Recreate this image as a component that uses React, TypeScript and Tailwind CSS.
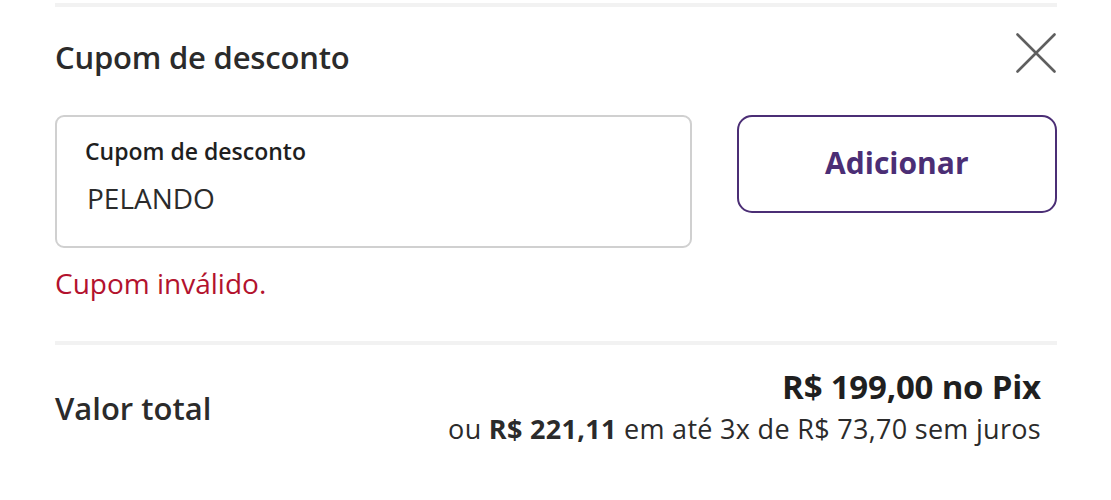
import React from "react";

const font = { fontFamily: '"Open Sans", "Noto Sans", sans-serif' };

function CloseIcon() {
  return (
    <svg width="40" height="40" viewBox="0 0 40 40" fill="none" aria-hidden="true">
      <path d="M1.5 1.5 L38.5 38.5 M38.5 1.5 L1.5 38.5" stroke="#5f5f5f" strokeWidth="2.6" strokeLinecap="round" />
    </svg>
  );
}

export default function App() {
  return (
    <div className="w-[1111px] h-[500px] bg-white text-[#2b2b2b]" style={font}>
      <div className="pl-[55px] pt-[3px] pr-[54px]">
        <div className="h-[4px] bg-[#f2f2f2]" />

        <div className="flex items-start justify-between mt-[26px]">
          <h2 className="text-[31px] font-semibold leading-[42px] mt-[3px] tracking-[-0.2px]">Cupom de desconto</h2>
          <button className="mr-[1px]">
            <CloseIcon />
          </button>
        </div>

        <div className="flex gap-[45px] mt-[37px] items-start">
          <div className="w-[638px] h-[133px] rounded-[9px] border-2 border-[#d0d0d0] pl-[28px] pt-[18px]">
            <div className="text-[23px] font-semibold leading-[32px] text-[#1f1f1f]">Cupom de desconto</div>
            <div className="text-[28px] leading-[36px] mt-[13px] ml-[2px] text-[#2b2b2b]">PELANDO</div>
          </div>
          <button className="w-[321px] h-[98px] rounded-[15px] border-2 border-[#4b2e75] text-[#4b2e75] text-[30px] font-bold pb-[4px]">
            Adicionar
          </button>
        </div>

        <p className="text-[28px] text-[#b3122e] mt-[16px] leading-[38px]">Cupom inválido.</p>

        <div className="h-[4px] bg-[#f2f2f2] mt-[39px]" />

        <div className="flex items-center justify-between mt-[20px] pr-[16px]">
          <div className="text-[31px] font-semibold leading-none mt-[3px]">Valor total</div>
          <div className="text-right">
            <div className="text-[33px] font-bold leading-[44px] text-[#1f1f1f] tracking-[-0.2px]">R$ 199,00 no Pix</div>
            <div className="text-[27px] leading-[40px] text-[#2b2b2b] tracking-[0.3px]">
              ou <span className="font-bold">R$ 221,11</span> em até 3x de R$ 73,70 sem juros
            </div>
          </div>
        </div>
      </div>
    </div>
  );
}
